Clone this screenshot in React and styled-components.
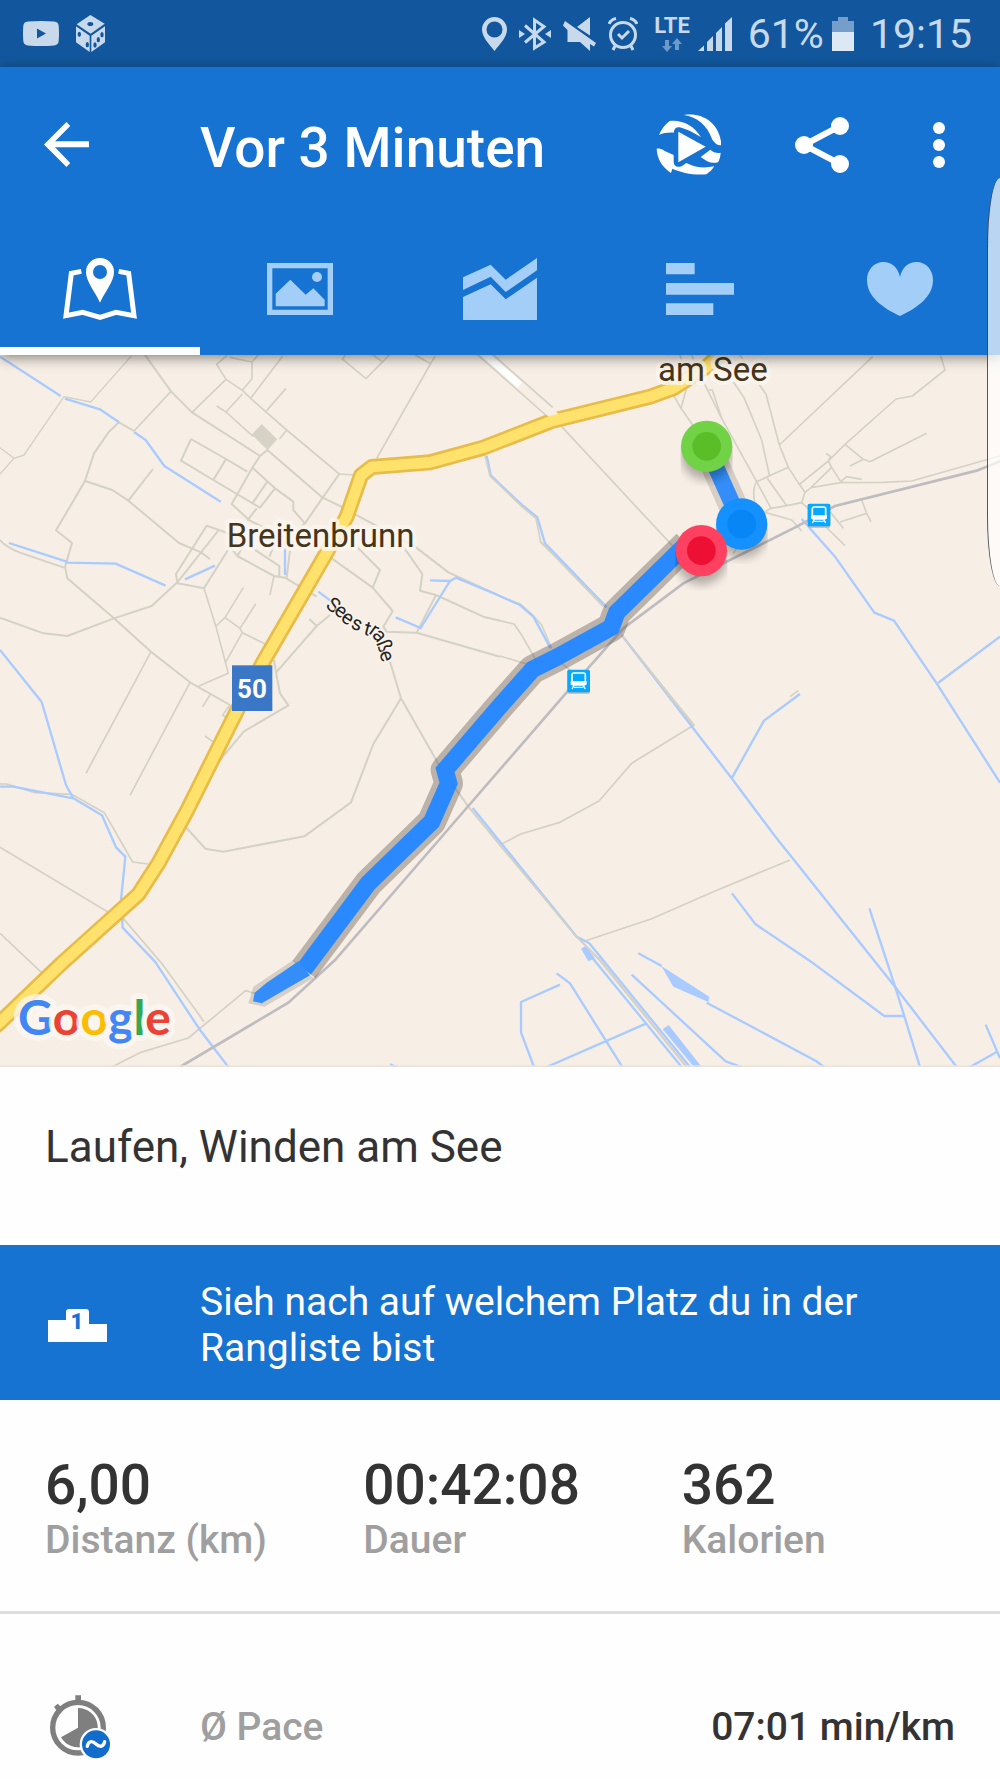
import React from "react";
import styled, { createGlobalStyle } from "styled-components";

const color = {
  status: "#12579d",
  statusInk: "#c9d9ec",
  primary: "#1673d2",
  tabIdle: "#a3cef8",
  surface: "#fefefe",
  ink: "#333333",
  muted: "#9f9f9f",
  divider: "#dddddd",
};

const GlobalStyle = createGlobalStyle`
  * { box-sizing: border-box; }
  body {
    margin: 0;
    background: ${color.surface};
    color: ${color.ink};
    font-family: Roboto, "Noto Sans", sans-serif;
  }
  h1, h2, p, dl, dt, dd { margin: 0; }
`;

const Screen = styled.div`
  position: relative;
  display: flex;
  flex-direction: column;
  overflow: hidden;
`;

const StatusBar = styled.div`
  display: flex;
  align-items: center;
  justify-content: space-between;
  height: 67px;
  padding: 0 28px 0 23px;
  background: ${color.status};
  color: ${color.statusInk};
`;

const StatusGroup = styled.div`
  display: flex;
  align-items: center;
  gap: ${(p) => p.$gap}px;
`;

const StatusText = styled.span`
  font-size: 41px;
  line-height: 48px;
`;

const Network = styled.span`
  display: flex;
  flex-direction: column;
  align-items: center;
  gap: 2px;
  font-size: 22px;
  line-height: 20px;
  font-weight: 700;
`;

const Header = styled.header`
  position: relative;
  z-index: 1;
  background: ${color.primary};
  box-shadow: 0 3px 12px rgba(0, 0, 0, 0.45);
`;

const Toolbar = styled.div`
  display: flex;
  align-items: center;
  height: 155px;
  padding: 0 11px 0 0;
`;

const Title = styled.h1`
  flex: 1;
  color: #fff;
  font-size: 55px;
  line-height: 64px;
  padding-top: 6px;
  font-weight: 500;
`;

const ToolButton = styled.button`
  display: flex;
  align-items: center;
  justify-content: ${(p) => p.$align || "center"};
  width: ${(p) => p.$width}px;
  height: 100px;
  padding: 0 0 0 ${(p) => p.$inset || 0}px;
  border: 0;
  background: none;
  color: #fff;
  cursor: pointer;
`;

const Tabs = styled.nav`
  display: grid;
  grid-template-columns: repeat(5, 1fr);
`;

const Tab = styled.button`
  display: flex;
  align-items: center;
  justify-content: center;
  height: 133px;
  padding: 8px 0 0;
  border: 0;
  border-bottom: 8px solid ${(p) => (p.$active ? "#fff" : "transparent")};
  background: none;
  color: ${(p) => (p.$active ? "#fff" : color.tabIdle)};
  cursor: pointer;
`;

const MapDrawing = styled.svg`
  display: block;
  width: 100%;
  height: auto;
  background: #f7efe6;
  font-family: Roboto, "Noto Sans", sans-serif;
`;

const Activity = styled.section`
  padding: 54px 45px 72px;
`;

const ActivityTitle = styled.h2`
  font-size: 44px;
  line-height: 52px;
  font-weight: 400;
`;

const Banner = styled.a`
  display: grid;
  grid-template-columns: 152px 1fr;
  align-items: center;
  padding: 34px 120px 29px 48px;
  background: ${color.primary};
  color: #fff;
  font-size: 39px;
  line-height: 46px;
  text-decoration: none;
`;

const Stats = styled.dl`
  display: grid;
  grid-template-columns: repeat(3, 1fr);
  padding: 53px 0 48px 45px;
  border-bottom: 3px solid ${color.divider};
`;

const Stat = styled.div`
  display: flex;
  flex-direction: column-reverse;
`;

const StatValue = styled.dd`
  font-size: 55px;
  line-height: 64px;
  font-weight: 500;
`;

const StatLabel = styled.dt`
  color: ${color.muted};
  font-size: 39px;
  line-height: 46px;
  font-weight: 500;
`;

const Details = styled.dl`
  padding: 81px 45px 19px 50px;
`;

const DetailRow = styled.div`
  display: grid;
  grid-template-columns: 150px 1fr auto;
  align-items: center;
`;

const DetailLabel = styled(StatLabel)``;

const DetailValue = styled.dd`
  font-size: 39px;
  line-height: 46px;
  font-weight: 500;
`;

const EdgePanel = styled.div`
  position: absolute;
  z-index: 2;
  top: 178px;
  right: 0;
  width: 13px;
  height: 408px;
  border-left: 1px solid rgba(20, 30, 40, 0.75);
  border-radius: 13px 0 0 13px / 70px 0 0 70px;
  background: rgba(255, 255, 255, 0.7);
`;

/* Status bar icons */

const VideoIcon = () => (
  <svg width="36" height="25" viewBox="0 0 36 25" aria-hidden="true">
    <path fillRule="evenodd" fill="currentColor" d="M5 .6Q18-.4 31 .6Q35.500 1 35.700 5Q36.300 12.500 35.700 20Q35.500 24 31 24.400Q18 25.400 5 24.400Q.5 24 .3 20Q-.3 12.500 .3 5Q.5 1 5 .6ZM14 7.500V17.500L23 12.500Z" />
  </svg>
);

const DiceIcon = () => (
  <svg width="29" height="37" viewBox="0 0 87 111" aria-hidden="true">
    <g fill="currentColor">
      <path d="M43 0L86 26L44 56L2 28Z" />
      <path d="M0 34L41 62V111L0 82Z" />
      <path d="M87 34L46 62V111L87 82Z" />
    </g>
    <g fill={color.status}>
      <ellipse cx="43" cy="27" rx="9" ry="6" />
      <ellipse cx="10" cy="58" rx="5" ry="8" />
      <ellipse cx="34" cy="89" rx="5" ry="8" />
      <ellipse cx="78" cy="59" rx="5" ry="8" />
      <ellipse cx="67" cy="74" rx="5" ry="8" />
      <ellipse cx="57" cy="90" rx="5" ry="8" />
    </g>
  </svg>
);

const PinIcon = () => (
  <svg width="25" height="34" viewBox="0 0 25 34" aria-hidden="true">
    <path fill="currentColor" fillRule="evenodd" d="M12.500 0A12.500 12.500 0 0 0 0 12.500C0 20 7 27 12.500 34C18 27 25 20 25 12.500A12.500 12.500 0 0 0 12.500 0ZM12.500 4.500A8 8 0 1 1 12.500 20.500A8 8 0 0 1 12.500 4.500Z" />
  </svg>
);

const BluetoothIcon = () => (
  <svg width="32" height="34" viewBox="0 0 32 34" aria-hidden="true">
    <path fill="none" stroke="currentColor" strokeWidth="3" d="M6 8.500L25 25L15.500 31V3L25 9.500L6 25.500" />
    <path fill="currentColor" d="M0 13L6 17L0 21ZM32 13L26 17L32 21Z" />
  </svg>
);

const MuteIcon = () => (
  <svg width="33" height="34" viewBox="0 0 33 34" aria-hidden="true">
    <path fill="currentColor" d="M14 10L27 0V18.500ZM2 4L33 26L31 29.500L27 27V34L17 25H4.500V13L0 8.500Z" />
  </svg>
);

const AlarmIcon = () => (
  <svg width="30" height="34" viewBox="0 0 30 34" aria-hidden="true">
    <g fill="none" stroke="currentColor" strokeWidth="3">
      <circle cx="15" cy="18" r="12.500" />
      <path d="M10 17L14 21L21 14" />
      <path d="M1 7Q3 2.500 8 1.500M29 7Q27 2.500 22 1.500M7 29L5 33M23 29L25 33" />
    </g>
  </svg>
);

const DataArrows = () => (
  <svg width="20" height="14" viewBox="0 0 20 14" aria-hidden="true">
    <path fill="#6d9ac8" d="M3 2H7V8H10L5 14L0 8H3ZM13 12V6H10L15 0L20 6H17V12Z" />
  </svg>
);

const SignalIcon = () => (
  <svg width="34" height="34" viewBox="0 0 34 34" aria-hidden="true">
    <path fill="currentColor" d="M0 34L6 28.500V34ZM9 34V25L15 19V34ZM18 34V16L24 10V34ZM27 34V6.500L34 0V34Z" />
  </svg>
);

const BatteryIcon = () => (
  <svg width="22" height="34" viewBox="0 0 22 34" aria-hidden="true">
    <path fill="#759fca" d="M6 0H16V4H22V15H0V4H6Z" />
    <path fill="#dce8f4" d="M0 15H22V34H0Z" />
  </svg>
);

/* Toolbar icons */

const BackIcon = () => (
  <svg width="45" height="45" viewBox="0 0 134 134" aria-hidden="true">
    <path fill="currentColor" d="M134 57V75H33L78 122L67 134L0 67L67 0L78 12L33 57Z" />
  </svg>
);

const ReplayIcon = () => (
  <svg width="66" height="61" viewBox="550 343 196 183" aria-hidden="true">
    <g fill="currentColor">
      <path d="M633 346C690 338 735 370 744 425V437C734 438 727 432 718 420C702 375 672 353 633 346Z" />
      <path d="M558 406C565 390 575 375 590 364C630 360 665 380 684 413C665 400 650 392 625 384C612 380 604 384 602 399C585 398 572 400 558 406Z" />
      <path d="M616 396L698 441L616 488Z" />
      <path d="M551 447C560 445 568 448 575 454L602 466V488C603 500 612 505 627 499L640 490C670 505 695 506 724 500C718 510 710 518 700 524C660 527 625 519 598 507L594 520C565 500 552 475 551 447Z" />
      <path d="M683 472L712 450C722 458 732 462 743 459C742 470 740 480 735 488C715 493 700 485 683 472Z" />
    </g>
  </svg>
);

const ShareIcon = () => (
  <svg width="54" height="56" viewBox="0 0 54 56" aria-hidden="true">
    <path fill="none" stroke="currentColor" strokeWidth="6" d="M45 9L9 28L45 47" />
    <g fill="currentColor">
      <circle cx="9" cy="28" r="9" />
      <circle cx="45" cy="9" r="9" />
      <circle cx="45" cy="47" r="9" />
    </g>
  </svg>
);

const MoreIcon = () => (
  <svg width="12" height="46" viewBox="0 0 12 46" aria-hidden="true">
    <g fill="currentColor">
      <circle cx="6" cy="6" r="6" />
      <circle cx="6" cy="23" r="6" />
      <circle cx="6" cy="40" r="6" />
    </g>
  </svg>
);

/* Tab icons */

const MapTabIcon = () => (
  <svg width="74" height="62" viewBox="189 774 222 186" aria-hidden="true">
    <path fill="none" stroke="currentColor" strokeWidth="15" d="M244 814L214 820L198 947L248 937L300 952L348 937L402 947L386 820L356 814" />
    <path fill="currentColor" fillRule="evenodd" d="M300 774A42 42 0 0 0 258 816C258 845 285 875 300 908C315 875 342 845 342 816A42 42 0 0 0 300 774ZM300 795A21 21 0 1 1 300 837A21 21 0 0 1 300 795Z" />
  </svg>
);

const PhotoTabIcon = () => (
  <svg width="66" height="52" viewBox="801 789 198 156" aria-hidden="true">
    <path fill="none" stroke="currentColor" strokeWidth="16" d="M809 797H991V937H809Z" />
    <path fill="currentColor" d="M827 919V881L871 839L917 884L940 865L974 899V919Z" />
    <circle cx="951" cy="831" r="15" fill="currentColor" />
  </svg>
);

const ChartTabIcon = () => (
  <svg width="74" height="62" viewBox="0 0 222 186" aria-hidden="true">
    <path fill="currentColor" d="M0 58L83 20L128 65L222 0V37L128 102L83 56L0 96ZM0 117L83 79L128 124L222 59V186H0Z" />
  </svg>
);

const SplitsTabIcon = () => (
  <svg width="68" height="52" viewBox="0 0 204 156" aria-hidden="true">
    <path fill="currentColor" d="M0 0H86V34H0ZM0 60H204V95H0ZM0 121H142V156H0Z" />
  </svg>
);

const HeartTabIcon = () => (
  <svg width="66" height="54" viewBox="0 0 198 162" aria-hidden="true">
    <path fill="currentColor" d="M99 45C93 15 72 0 50 0C20 0 0 24 0 54C0 105 48 138 99 162C150 138 198 105 198 54C198 24 178 0 148 0C126 0 105 15 99 45Z" />
  </svg>
);

/* Content icons */

const PodiumIcon = () => (
  <svg width="59" height="33" viewBox="0 0 59 33" aria-hidden="true">
    <path fill="#fff" d="M0 11H18V3Q18 0 21 0H38Q41 0 41 3V15H59V33H0Z" />
    <text x="29" y="20" textAnchor="middle" fontSize="22" fontWeight="900" fontFamily="Roboto, sans-serif" fill={color.primary}>1</text>
  </svg>
);

const PaceIcon = () => (
  <svg width="61" height="64" viewBox="150 102 183 192" aria-hidden="true">
    <circle cx="234" cy="200" r="76" fill="none" stroke="#7f7f7f" strokeWidth="16" />
    <path fill="#7f7f7f" d="M226 103H243V122H226ZM162 138L173 128L184 138L172 151Z" />
    <path fill="#7f7f7f" d="M234 141A59 59 0 1 1 183 229L234 200Z" />
    <circle cx="288" cy="250" r="49" fill={color.surface} />
    <circle cx="288" cy="250" r="42" fill="#116ccb" />
    <path fill="none" stroke="#fff" strokeWidth="10" strokeLinecap="round" d="M262 256C264 240 276 238 288 249C300 260 311 257 314 242" />
  </svg>
);

const Station = ({ x, y }) => (
  <g transform={`translate(${x} ${y})`}>
    <rect y="4" width="68" height="68" rx="5" fill="#bdb4ab" />
    <rect width="68" height="68" rx="5" fill="#05a9ff" />
    <rect x="14" y="10" width="40" height="36" rx="5" fill="none" stroke="#fff" strokeWidth="5" />
    <path d="M12 37H56V43H12ZM20 47L14 58M48 47L54 58M20 53H48" fill="#fff" stroke="#fff" strokeWidth="4" />
  </g>
);

const Marker = ({ id, x, y, ring, core }) => (
  <g transform={`translate(${x} ${y})`}>
    <clipPath id={id}>
      <rect x="-78" y="0" width="156" height="120" />
    </clipPath>
    <g clipPath={`url(#${id})`}>
      <circle cy="24" r="78" fill="#000" opacity="0.28" filter="url(#soft)" />
    </g>
    <circle r="77" fill={ring} />
    <circle r="43" fill={core} />
  </g>
);

const yellowRoad =
  "M-30 2042L0 2017L185 1840L415 1633L475 1540L560 1384L712 1080L790 935L970 625L1040 500L1083 376L1115 351L1290 337L1450 293L1655 213L1950 140L2020 115L2120 50L2170 5";
const routeMain =
  "M2060 582L1850 788L1834 832L1670 922L1598 958L1500 1068L1335 1260L1346 1300L1295 1415L1105 1600L912 1858";

const RouteMap = () => (
  <MapDrawing viewBox="0 15 3000 2136" role="img" aria-label="Laufstrecke">
    <defs>
      <filter id="soft" x="-30%" y="-30%" width="160%" height="160%">
        <feGaussianBlur stdDeviation="14" />
      </filter>
    </defs>

    <path fill="#d6d2c6" d="M785 222L832 268L803 300L755 254Z" />

    <g fill="none" stroke="#d4d1c5" strokeWidth="6" strokeLinejoin="round">
      <path d="M435 15L513 124L576 187L780 318L802 300L968 443L1030 473M1060 490L1245 590L1345 667L1500 738" />
      <path d="M513 124L402 243M576 187L678 88L650 43L680 17M678 88L727 121L756 86V36L775 15M690 22L756 36M727 121L752 145L848 18M752 145L860 240L1018 372L1065 375M650 168L678 186L760 260M678 186L727 132M800 182L858 115M860 240L838 268" strokeWidth="5" />
      <path d="M1018 372L968 443L915 520L880 480V455L825 415L757 353L780 318M757 353L695 462L750 512L905 590M573 267L543 332L640 390L780 473L825 415M573 267L678 327L742 365M678 327L640 390M802 395L757 460M770 475L742 512M915 520L880 550" />
      <path d="M1305 18L1130 325M1025 25L1098 86L1168 15M1120 15L1150 38M1245 15L1290 40M1028 28L1035 15" strokeWidth="5" />
      <path d="M395 17L272 156L192 140L72 315L42 325L0 293M42 325L0 372" strokeWidth="4" />
      <path d="M402 243L357 217L327 245L282 310L255 393L168 541L216 579L195 650L202 685L342 805L453 905L570 997L690 1065M255 393L337 420L385 452L537 579L603 607L630 627M385 452L459 357" />
      <path d="M0 570Q15 590 60 608L192 653M0 803L130 850L202 858L342 805L455 768L532 697L528 672L620 527L690 552M532 697L654 543M532 700L612 715L690 590L712 618L822 678L855 683L950 740M712 618L735 580L838 648V678M808 620L825 580" />
      <path d="M612 715L648 830L685 970L597 1008M648 828L675 803L730 713M675 803L720 835L767 762M720 835L727 848L797 883M727 848L675 940M822 678L810 735M453 905L258 1270M570 997L390 1336M630 1035L608 1070" strokeWidth="5" />
      <path d="M995 625L1118 713L1178 783L1150 830L1160 845L1250 848L1500 920M1118 713L1140 660L1070 590M1210 590L1267 672L1260 722L1308 735L1250 848M1308 735L1450 800L1500 812M860 683L870 600" />
      <path d="M990 795L950 828L828 968L840 1030L865 1066L732 1144L660 1230M928 807L950 828M822 930L828 968M1170 935L1203 1045L1120 1182L1053 1357L913 1459L670 1505L616 1496L552 1425M1203 1045L1320 1250L1405 1370L1500 1485L1730 1760L1800 1832L2060 2151" />
      <path d="M690 1065L668 1095L680 1105M615 1158L640 1176M0 1302H20L105 1328L215 1333L313 1388L398 1536L445 1542M0 1492L325 1687M365 1700L485 1840L612 2015M0 1750L125 1868M335 2151L420 2108L565 2064L737 1922L770 1932" strokeWidth="5" />
    </g>

    <g transform="translate(1500 0)" fill="none" stroke="#d4d1c5" strokeWidth="5" strokeLinejoin="round">
      <path d="M185 230L520 590M520 135L543 175L580 228M543 175L565 95M610 95L665 205L770 395L813 475M625 120H637L665 205M700 95L733 145L785 270L808 375M775 100L798 132L838 285L865 352L898 403L915 427L905 458L860 467L813 475L770 500L700 610M540 15L565 95M575 15L610 95M720 15L775 100" />
      <path d="M838 285L1118 20M898 403L985 333L1035 283L1188 147L1237 138L1335 60L1322 18M1035 283L1090 328L1110 335L1280 250M1090 328L1050 348M978 310L992 320L985 333L995 352L1022 395L1040 380L1085 388M995 352L933 413L1022 398L1150 397L1235 393L1500 318M915 427L933 413M770 395L865 352M802 385L860 467M770 395Q755 420 765 460" />
      <path d="M795 487L875 510L905 543M905 458L935 485M990 485L1030 535M1020 516L1100 490L1085 450M1100 490L1113 515M975 528L1035 587M0 812L42 822L65 855L105 925L125 950M0 918L80 942L125 930M0 740L60 762L98 795L125 825L155 895" />
      <path d="M120 575L320 770M185 940L210 960M365 855L582 1125L395 1240L297 1353L177 1418L62 1452L0 1485M870 1530L640 1625L455 1706L255 1773L240 1765M870 1040L895 1022M1315 1000L1500 860" />
    </g>

    <g fill="none" stroke="#a9cbff" strokeWidth="7" strokeLinejoin="round">
      <path d="M0 20L182 138M195 146L300 178L357 217M402 246L437 270L493 348L662 455M27 579L200 635V638L347 641L497 707M555 688L645 647M855 570V675M955 725L995 755M0 900L125 1056L198 1305L220 1345L306 1396L348 1492L376 1520L363 1650L368 1733L465 1835L600 2040L685 2151M0 1310L40 1310L220 1345" />
      <path d="M1460 317L1472 375L1500 403L1570 468L1612 502L1635 580L1820 772M1290 691L1350 693L1368 683L1500 738L1560 765L1600 800L1652 895M1350 693L1262 834L1187 802M1865 855L2060 1109L2195 1285L2330 1465L2685 1910L2870 2151M2195 1285L2292 1112L2400 1032" />
      <path d="M2405 507L2505 620L2623 788L2682 812L2810 1000L3000 1298M2815 998L3000 860M2608 1675L2688 1918L2760 2151M2196 1630L2267 1723L2440 1840L2653 1998H2712M2957 2024L3000 2125M2910 2151L2990 2106" />
      <path d="M1418 1374L1730 1760L1768 1780L2070 2151M1770 1815L2045 2151M1680 1904L1563 1956V2047L1602 2151M1670 1870L1710 1900L1867 2151M1640 2151L1938 2021M1895 1874L2177 2134L2225 2151M1915 1810L1985 1848M2120 1958L2448 2133L2472 2151M1170 2143L1190 2151" />
    </g>
    <path fill="#a9cbff" d="M1984 1848L2128 1940L2125 1956L2020 1910ZM1743 1796L1757 1788L1785 1825L1765 1834ZM1988 2038L2006 2025L2105 2151H2082Z" />
    <path fill="none" stroke="#d4d1c5" strokeWidth="5" d="M1500 1485L1730 1760L1805 1835L2060 2151M1865 855L2010 1040L2082 1128M1455 317L1470 378L1568 472L1608 505L1622 575L1810 770" />

    <path fill="none" stroke="#bfbcc0" strokeWidth="8" d="M540 2151L865 1958L1005 1830L1405 1368L1702 1025L1870 835L2050 700L2390 530L2505 468L2930 362L3010 330" />

    <path fill="none" stroke="#e7bc49" strokeWidth="48" strokeLinejoin="round" d={yellowRoad} />
    <path fill="none" stroke="#d4d1c5" strokeWidth="36" d="M1440 0L1648 184" />
    <path fill="none" stroke="#f7efe6" strokeWidth="26" d="M1440 0L1666 200" />
    <path fill="none" stroke="#fff" strokeWidth="20" d="M1440 0L1560 106" />
    <path fill="none" stroke="#ffe26b" strokeWidth="32" strokeLinejoin="round" d={yellowRoad} />

    <g fill="none" stroke="#5a5048">
      <path strokeOpacity="0.38" strokeWidth="86" strokeLinejoin="round" d={routeMain} />
      <path strokeOpacity="0.2" strokeWidth="86" d="M2120 290L2224 522" />
    </g>
    <path fill="#5a5048" fillOpacity="0.2" d="M880 1830L760 1910L745 1960L793 1970L940 1885Z" />
    <path fill="none" stroke="#2a89fe" strokeWidth="52" d={routeMain} />
    <path fill="none" stroke="#348df8" strokeWidth="50" d="M2120 290L2224 522L2102 602" />
    <path fill="#348df8" d="M895 1834L930 1876L785 1960L759 1954L764 1928L800 1898Z" />

    <Station x={2423} y={461} />
    <Station x={1702} y={959} />

    <g fill="#45361a" stroke="#fbf6f0" strokeOpacity="0.85" strokeWidth="24" strokeLinejoin="round" paintOrder="stroke">
      <text x="680" y="592" fontSize="99">Breitenbrunn</text>
      <text x="1974" y="92" fontSize="99">am See</text>
      <text
        x="974 999 1019 1050 1088 1104 1114 1128 1137"
        y="772 789 810 834 853 849 856 879 908"
        rotate="35 35 35 20 15 35 50 68 72"
        fontSize="60"
        fill="#27241f"
        strokeWidth="10"
        strokeOpacity="0.6"
      >
        Seestraße
      </text>
    </g>

    <rect x="696" y="946" width="121" height="137" fill="#3a77c6" />
    <text x="756" y="1045" textAnchor="middle" fontSize="78" fontWeight="700" fill="#fff">50</text>

    <Marker id="start" x={2120} y={289} ring="#72d245" core="#59be27" />
    <Marker id="pause" x={2225} y={522} ring="#1590ff" core="#0986f6" />
    <Marker id="finish" x={2104} y={602} ring="#ff4161" core="#ee1034" />

    <text
      x="54"
      y="2054"
      fontFamily="Lato, Roboto, sans-serif"
      fontSize="144"
      fontWeight="700"
      stroke="#fbf7f2"
      strokeOpacity="0.8"
      strokeWidth="34"
      strokeLinejoin="round"
      paintOrder="stroke"
    >
      <tspan fill="#4285f4">G</tspan>
      <tspan fill="#ea4335">o</tspan>
      <tspan fill="#fbbc05">o</tspan>
      <tspan fill="#4285f4">g</tspan>
      <tspan fill="#34a853">l</tspan>
      <tspan fill="#ea4335">e</tspan>
    </text>
    <path stroke="#ebe2da" strokeWidth="5" d="M0 2148H3000" />
  </MapDrawing>
);

const tabs = [
  { name: "Karte", Icon: MapTabIcon, active: true },
  { name: "Fotos", Icon: PhotoTabIcon },
  { name: "Diagramm", Icon: ChartTabIcon },
  { name: "Zwischenzeiten", Icon: SplitsTabIcon },
  { name: "Herzfrequenz", Icon: HeartTabIcon },
];

const stats = [
  { value: "6,00", label: "Distanz (km)" },
  { value: "00:42:08", label: "Dauer" },
  { value: "362", label: "Kalorien" },
];

export default function App() {
  return (
    <Screen>
      <GlobalStyle />
      <StatusBar>
        <StatusGroup $gap={17}>
          <VideoIcon />
          <DiceIcon />
        </StatusGroup>
        <StatusGroup $gap={16}>
          <StatusGroup $gap={12}>
            <PinIcon />
            <BluetoothIcon />
            <MuteIcon />
            <AlarmIcon />
          </StatusGroup>
          <StatusGroup $gap={8}>
            <Network>
              LTE
              <DataArrows />
            </Network>
            <SignalIcon />
          </StatusGroup>
          <StatusGroup $gap={8}>
            <StatusText>61%</StatusText>
            <BatteryIcon />
          </StatusGroup>
          <StatusText>19:15</StatusText>
        </StatusGroup>
      </StatusBar>

      <Header>
        <Toolbar>
          <ToolButton $width={200} $align="flex-start" $inset={44} aria-label="Zurück">
            <BackIcon />
          </ToolButton>
          <Title>Vor 3 Minuten</Title>
          <ToolButton $width={132} aria-label="Strecke abspielen">
            <ReplayIcon />
          </ToolButton>
          <ToolButton $width={134} aria-label="Teilen">
            <ShareIcon />
          </ToolButton>
          <ToolButton $width={100} aria-label="Mehr">
            <MoreIcon />
          </ToolButton>
        </Toolbar>
        <Tabs>
          {tabs.map(({ name, Icon, active }) => (
            <Tab key={name} $active={active} aria-label={name} aria-current={active ? "page" : undefined}>
              <Icon />
            </Tab>
          ))}
        </Tabs>
      </Header>

      <RouteMap />

      <Activity>
        <ActivityTitle>Laufen, Winden am See</ActivityTitle>
      </Activity>

      <Banner href="#rangliste">
        <PodiumIcon />
        <span>Sieh nach auf welchem Platz du in der Rangliste bist</span>
      </Banner>

      <Stats>
        {stats.map(({ value, label }) => (
          <Stat key={label}>
            <StatLabel>{label}</StatLabel>
            <StatValue>{value}</StatValue>
          </Stat>
        ))}
      </Stats>

      <Details>
        <DetailRow>
          <PaceIcon />
          <DetailLabel>Ø Pace</DetailLabel>
          <DetailValue>07:01 min/km</DetailValue>
        </DetailRow>
      </Details>

      <EdgePanel />
    </Screen>
  );
}
